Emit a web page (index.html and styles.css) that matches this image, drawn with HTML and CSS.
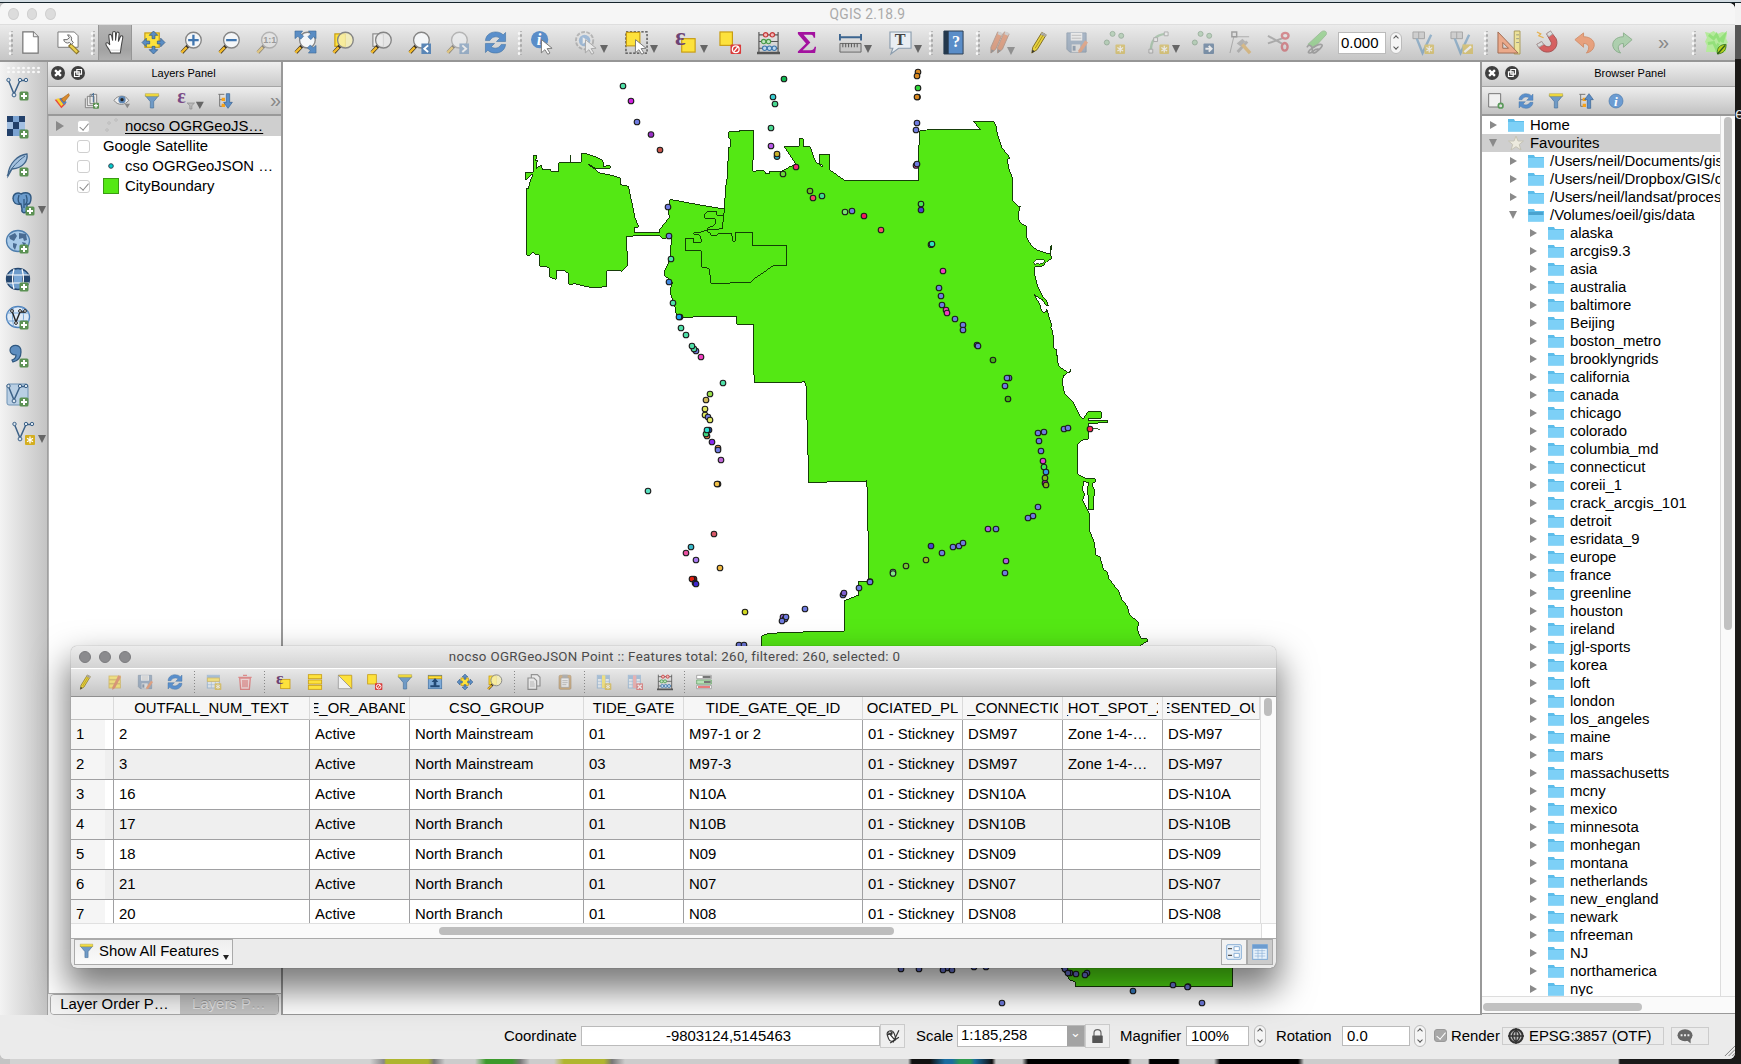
FILE: index.html
```
<!DOCTYPE html>
<html lang="en">
<head>
<meta charset="utf-8">
<title>QGIS 2.18.9</title>
<link rel="stylesheet" href="styles.css">
</head>
<body>
<div class="desktop">
  <div class="app">
    <header class="titlebar"><span class="lights"><i></i><i></i><i></i></span><span class="title">QGIS 2.18.9</span></header>
    <nav class="toolbar" id="toolbar"></nav>
    <main class="main">
      <aside class="sidebar" id="sidebar"></aside>
      <section class="layers">
        <div class="panel-head"><span class="pbtn" data-icon="close"></span><span class="pbtn" data-icon="float"></span><b>Layers Panel</b></div>
        <div class="panel-tools layer-tools">
          <span data-icon="brush"></span><span data-icon="group"></span><span data-icon="eye"></span><span data-icon="filter"></span><span class="eps" data-icon="epsfilter"></span><span data-icon="expand"></span><span class="more">»</span>
        </div>
        <div class="layer-list">
          <div class="layer selected"><i class="tri right"></i><i class="check on"></i><svg class="sym" viewBox="0 0 16 16"><g fill="#ddd" stroke="#aaa" stroke-width=".7"><circle cx="13" cy="2" r="1.2"/><circle cx="6" cy="5" r="1.2"/><circle cx="4" cy="12" r="1.2"/></g></svg><u>nocso OGRGeoJS…</u></div>
          <div class="layer"><i class="tri"></i><i class="check"></i><span>Google Satellite</span></div>
          <div class="layer"><i class="tri"></i><i class="check"></i><svg class="sym" viewBox="0 0 16 16"><circle cx="8" cy="8" r="2.3" fill="#0cc" stroke="#345" stroke-width="1"/></svg><span>cso OGRGeoJSON …</span></div>
          <div class="layer"><i class="tri"></i><i class="check on"></i><i class="sym swatch"></i><span>CityBoundary</span></div>
        </div>
        <div class="tabs"><span class="tab active">Layer Order P…</span><span class="tab">Layers P…</span></div>
      </section>
      <section class="canvas">
        <svg id="map" viewBox="283 62 1197 952">
          <g class="shape" transform="translate(500 100) scale(.33333)">
            <path class="land" d="M80 465V265L86 264 90 246 97 228 98 222 90 228 77 241V217L101 216V166H109V175L106 182 112 181 108 205 124 196 127 208H150L152 214H176V188L212 187V164L213 187H244V160L258 161 280 168 306 179 312 190 311 200 326 195 333 202 328 207H288L270 195 265 194 285 207 296 218 340 227 361 234V254L373 256 385 259 396 310 404 350 416 381 403 382V397L477 398 480 388 508 352 505 328 509 300 515 299 600 315 673 327 677 262 683 225 685 143 690 142 691 120 686 112V95H718L720 91H760V145L758 214 768 213 770 210 788 211 796 216 797 222H808V214H844L872 199 888 193 853 140 898 139V116H910V139L930 140 940 168 948 186 966 200 970 198 958 190V163H989L988 209 1034 241H1256V158L1259 92 1278 91 1280 89 1442 88 1420 65H1482L1488 77 1492 103 1505 142 1530 174 1522 178 1525 200 1538 238V302L1558 323 1561 317 1559 325 1556 335V360L1564 371 1578 378 1580 412 1592 434 1610 450 1640 460 1651 461 1653 440 1649 441 1655 437 1651 461 1655 476 1640 485 1628 498 1605 500 1602 504 1603 520 1612 556 1627 588 1640 602 1645 617 1638 615 1628 600 1612 590 1602 582 1609 596 1618 610 1625 632 1631 637 1638 635 1640 626 1644 640 1656 678 1652 684 1657 690 1661 720 1662 745 1670 750 1669 765 1674 768 1673 780 1675 796 1685 805 1704 818 1711 812 1710 806 1711 815 1700 820 1690 828 1687 850 1694 880 1705 893 1717 902 1742 952 1748 956 1752 953 1764 935H1804V955H1765V962H1823V968L1765 970V1018H1750L1730 1035 1733 1039V1122L1750 1132 1760 1137H1786V1146L1779 1148V1162L1783 1170 1780 1230H1766V1190L1762 1180 1765 1147 1750 1145 1748 1170 1754 1185 1747 1200 1760 1225 1768 1242V1290L1783 1328 1788 1365 1800 1370 1810 1408 1822 1415 1826 1435 1856 1474 1866 1500 1882 1518 1888 1542 1917 1570 1913 1580V1592L1923 1615H1940L1943 1623 1932 1630 1920 1637 2198 2200V2659H1726V2645L1710 2640 1680 2600 785 2200V1608L805 1600 936 1595 1033 1594V1502L1076 1485V1444H1106V1298L1103 1290 1102 1180 1100 1142 1094 1144 925 1147V1100L918 855 914 845 900 847H763L760 780V673H710L709 649 625 650 538 652 528 640 524 615 518 600 511 580 513 560 517 548 505 535 493 527 494 512 505 490 511 470 513 435 516 418 505 408 495 416 488 417 477 406 400 408 380 409 382 497 365 514 355 511 320 512V560L275 563 240 555 222 550 217 555 207 552 206 520 190 511 170 510 168 538 149 532V505L140 500 119 499 117 465 104 463 101 455 90 466Z"/>
            <path class="inner" d="M557 415H580V427H604V420L598 404 582 402V398L600 397 620 390 668 386 670 345 663 347 650 346V335H622L614 342V354L645 356 647 368 640 378 623 383V395L632 400V406H650L656 401H695L698 424H706L707 397H757L758 438 860 437V496L820 497 755 542 752 548 632 550 629 510 620 502H605L604 452H557ZM673 327L674 337 668 345M670 345L673 338"/>
            <path class="water" d="M1601 485L1610 479H1633V487L1618 493 1612 490 1604 496ZM1779 987L1788 985 1800 989"/>
          </g>
          <g id="dots"></g>
        </svg>
      </section>
      <section class="browser">
        <div class="panel-head"><span class="pbtn" data-icon="close"></span><span class="pbtn" data-icon="float"></span><b>Browser Panel</b></div>
        <div class="panel-tools browser-tools">
          <span data-icon="addsel"></span><span data-icon="refresh"></span><span data-icon="filter"></span><span data-icon="collapse"></span><span data-icon="info"></span>
        </div>
        <div class="tree-wrap">
          <div class="tree" id="tree"></div>
          <div class="vscroll"><i></i></div>
        </div>
        <div class="hscroll"><i></i></div>
      </section>
    </main>
    <footer class="status">
      <span class="lbl coord">Coordinate</span><span class="field f-coord">-9803124,5145463</span><span class="sbtn" data-icon="mouse"></span>
      <span class="lbl scale">Scale</span><span class="combo"><span>1:185,258</span><i>⌄</i></span><span class="sbtn" data-icon="lock"></span>
      <span class="lbl mag">Magnifier</span><span class="field f-mag">100%</span><span class="spin"><i></i><i></i></span>
      <span class="lbl rot">Rotation</span><span class="field f-rot">0.0</span><span class="spin"><i></i><i></i></span>
      <span class="check grey on"></span><span class="lbl render">Render</span>
      <span class="epsg"><span data-icon="globe"></span>EPSG:3857 (OTF)</span><span class="msg" data-icon="bubble"></span>
      <svg class="grip" viewBox="0 0 12 12"><path d="M1 12L12 1M5 12L12 5M9 12L12 9" stroke="#777"/></svg>
    </footer>
  </div>
  <div class="behind"><span class="b1"></span><span class="b2"></span><span class="b3">e</span></div>
</div>

<section class="attr">
  <header class="attr-title"><span class="lights dark"><i></i><i></i><i></i></span><span>nocso OGRGeoJSON Point :: Features total: 260, filtered: 260, selected: 0</span></header>
  <div class="attr-tools" id="attrTools"></div>
  <div class="attr-body">
    <div class="grid" id="grid"></div>
    <div class="attr-v"><i></i></div>
  </div>
  <div class="attr-h"><i></i><b></b></div>
  <footer class="attr-foot"><button class="show"><span data-icon="filter"></span>Show All Features<i></i></button><span class="views"><span data-icon="form"></span><span class="on" data-icon="table"></span></span></footer>
</section>
<script src="app.js"></script>
</body>
</html>
```
FILE: styles.css
```
* { box-sizing: border-box; }
html, body { margin: 0; height: 100%; overflow: hidden; }
body { font: 14.9px/18px "Liberation Sans", Arial, sans-serif; color: #000; }
i { font-style: normal; }
svg { display: block; overflow: visible; }
span[data-icon] svg { width: 100%; height: 100%; }

.desktop {
  display: flex; width: 1741px; height: 1064px; padding-top: 3px;
  background:
    linear-gradient(#d3dce2 0 2px, #16242c 2px 3px, transparent 3px),
    linear-gradient(90deg, #c4c4c4 0 10px, #d2d2d2 10px 370px, #888 384px, #aeb52f 386px 428px, #777 434px, #ccc 445px 475px, #3c9a2c 486px 512px, #777 520px, #ccc 530px 554px, #b0b62f 564px 604px, #777 612px, #ccc 625px 908px, #111 912px 930px, #1a6da0 945px 952px, #2e9a50 960px 970px, #1a6da0 975px, #111 992px, #ccc 996px 1022px, #000 1028px 1128px, #ccc 1132px 1148px, #000 1150px 1178px, #ccc 1180px 1214px, #000 1220px 1298px, #ccc 1304px 1618px, #1a1a1a 1620px);
}
.app { display: flex; flex-direction: column; width: 1735px; height: 1056px; background: #ebebeb; border-radius: 6px; overflow: hidden; }
.behind { display: flex; flex-direction: column; width: 6px; height: 1056px; background: #1b1917; }
.b1 { height: 22px; background: #f2f2f2; }
.b2 { height: 34px; background: #565656; }
.b3 { margin-top: 46px; color: #ddd; font-size: 16px; overflow: hidden; }

.titlebar { display: flex; align-items: center; height: 22px; background: #f6f6f6; border-bottom: 1px solid #dedede; }
.titlebar .title { width: 1735px; margin-left: -56px; padding-top: 1px; text-align: center; color: #aaa; font: 13.8px Roboto, sans-serif; letter-spacing: .3px; flex: none; }
.lights { display: flex; flex: none; gap: 8px; padding-left: 8px; width: 56px; }
.lights i { width: 12px; height: 12px; border-radius: 50%; background: #dcdcdc; border: 1px solid #cfcfcf; }

.toolbar { display: flex; align-items: center; height: 37px; padding-left: 11px; background: linear-gradient(#ebebeb, #c6c6c6); border-bottom: 2px solid #969696; }
.tool { display: flex; align-items: center; justify-content: center; position: relative; width: 38px; height: 35px; flex: none; }
.tool.menu { width: 50px; }
.tool svg { width: 23px; height: 23px; }
.tool.menu::after, .tool.menu2::after { content: ""; position: absolute; right: 3px; bottom: 7px; border: 4px solid transparent; border-top: 8px solid #666; border-bottom: 0; }
.tool.menu2::after { opacity: .6; right: 4px; bottom: 5px; }
.tool.active { width: 34px; margin: 0 2px; background: linear-gradient(#b5b5b5, #a2a2a2 70%, #b0b0b0); border: solid #969696; border-width: 0 1px; }
.tool.off svg { opacity: .48; }
.tool.soft svg { opacity: .8; }
.handle { width: 9px; height: 24px; flex: none; background: radial-gradient(circle, #f8f8f8 1px, transparent 1.6px) 3px 0/4px 5px, radial-gradient(circle, #aaa 1px, transparent 1.5px) 5px 2px/4px 5px; background-repeat: repeat-y; }
.handle.first { margin-left: -6px; margin-right: -3px; }
.num { width: 48px; height: 22px; margin-left: 3px; padding-left: 2px; background: #fff; border: 1px solid #bbb; font-size: 15px; line-height: 20px; }
.spin { display: flex; flex-direction: column; justify-content: center; gap: 5px; align-items: center; width: 12px; height: 22px; background: #f5f5f5; border: 1px solid #bbb; border-radius: 6px; flex: none; }
.spin i { width: 4px; height: 4px; border: solid #555; border-width: 1px 0 0 1px; transform: rotate(45deg); }
.spin i + i { transform: rotate(225deg); }
.toolbar .spin { margin: 0 2px 0 4px; }
.push { flex: 1; }
.more { color: #888; font-size: 20px; line-height: 20px; }
.toolbar .more { width: 15px; margin-right: 15px; padding-bottom: 2px; }

.main { display: flex; height: 953px; }
.sidebar { display: flex; flex-direction: column; width: 48px; padding: 4px 0 0 6px; background: linear-gradient(90deg, #f3f3f3, #c4c4c4); border-right: 1px solid #a0a0a0; flex: none; }
.sidebar .dots { width: 34px; height: 8px; margin-bottom: 3px; background: radial-gradient(circle, #f8f8f8 1px, transparent 1.6px) 0 0/5px 4px; }
.stool { display: flex; position: relative; width: 42px; height: 38.2px; align-items: flex-start; }
.stool svg { width: 24px; height: 24px; }
.stool.sub svg { margin-left: 6px; }
.stool.sub::after { content: ""; position: absolute; left: 32px; top: 14px; border: 4px solid transparent; border-top: 8px solid #666; border-bottom: 0; }

.layers { display: flex; flex-direction: column; width: 235px; background: #e9e9e9; border-right: 2px solid #999; flex: none; }
.panel-head { display: flex; align-items: center; height: 25px; background: linear-gradient(#efefef, #cacaca); border-bottom: 1px solid #a5a5a5; gap: 4px; padding: 0 0 2px 3px; flex: none; }
.panel-head b { flex: 1; font-weight: 400; font-size: 11px; text-align: center; }
.layers .panel-head b { padding-right: 5px; }
.pbtn { width: 14px; height: 14px; margin-right: 2px; flex: none; }
.panel-tools { display: flex; align-items: center; height: 29px; background: linear-gradient(#ededed, #c2c2c2); border-bottom: 2px solid #999; flex: none; }
.panel-tools > span { width: 16px; height: 16px; flex: none; margin-right: 14px; }
.layer-tools { padding-left: 6px; }
.panel-tools > .eps { width: 25px; margin: 0 14px 0 4px; }
.panel-tools > .more { width: auto; height: auto; margin: 0 0 2px auto; }
.layer-list { flex: 1; background: #fff; border-left: 1px solid #b5b5b5; border-bottom: 1px solid #aaa; }
.layer { display: flex; align-items: center; height: 20px; white-space: nowrap; }
.layer.selected { background: #cfcfcf; }
.layer u { text-underline-offset: 2px; }
.tri { width: 8px; margin: 0 13px 0 7px; flex: none; }
.tri.right { border: 5px solid transparent; border-left: 8px solid #8a8a8a; border-right: 0; }
.check { display: flex; align-items: center; justify-content: center; width: 13px; height: 13px; border: 1px solid #cfcfcf; border-radius: 3px; background: #fff; margin-right: 13px; flex: none; }
.check.on::before { content: ""; width: 4px; height: 8px; border: solid #8a8a8a; border-width: 0 1.6px 1.6px 0; transform: rotate(40deg) translateY(-1px); }
.sym { width: 16px; height: 16px; margin-right: 6px; flex: none; }
.swatch { background: #54e814; border: 1px solid #3a9c12; }
.tabs { display: flex; height: 21px; margin: 0 2px 0; border: 1px solid #a8a8a8; border-radius: 4px; overflow: hidden; }
.tab { width: 99px; background: #c4c4c4; color: #e4e4e4; text-shadow: 0 -1px 0 #999; text-align: center; line-height: 19px; white-space: nowrap; }
.tab.active { width: 130px; background: #f4f4f4; color: #000; text-shadow: none; padding-right: 2px; }

.canvas { width: 1197px; background: #fff; border-bottom: 1px solid #999; flex: none; }
#map { width: 1197px; height: 952px; overflow: hidden; }
.land { fill: #54e814; stroke: #173d0a; stroke-width: 3; shape-rendering: crispEdges; }
.inner { fill: none; stroke: #124006; stroke-width: 3; shape-rendering: crispEdges; }
.water { fill: #fff; stroke: #173d0a; stroke-width: 2.5; shape-rendering: crispEdges; }
#dots circle { stroke: #1c1c1c; stroke-width: 1.1; }

.browser { display: flex; flex-direction: column; flex: 1; min-width: 0; border-left: 2px solid #999; }
.browser-tools { padding-left: 6px; }
.tree-wrap { display: flex; height: 880px; }
.tree { width: 238px; background: #fff; overflow: hidden; }
.node { display: flex; align-items: center; height: 18px; white-space: nowrap; padding-left: 7px; }
.node.l1 { padding-left: 27px; }
.node.l2 { padding-left: 47px; }
.node.sel { background: #cfcfcf; }
.node .arrow { width: 9px; height: 10px; margin-right: 10px; flex: none; }
.node .fold { width: 16px; height: 14px; margin-right: 6px; flex: none; }
.vscroll { flex: 1; background: #fafafa; border-left: 1px solid #ddd; padding: 1px 3px; }
.vscroll i { display: block; width: 8px; height: 513px; border-radius: 4px; background: #c1c1c1; }
.hscroll { height: 18px; padding: 6px 1px 3px; background: #fafafa; border-top: 1px solid #ddd; border-bottom: 1px solid #999; }
.hscroll i { display: block; width: 159px; height: 8px; border-radius: 4px; background: #c1c1c1; }

.status { display: flex; align-items: center; flex: 1; padding: 0 0 3px 504px; white-space: nowrap; background: #ebebeb; }
.status > * { flex: none; }
.field { height: 20px; background: #fff; border: 1px solid #bbb; line-height: 18px; padding-left: 4px; }
.coord { width: 77px; }
.f-coord { width: 299px; text-align: center; padding: 0 4px 0 0; }
.sbtn { width: 25px; height: 24px; padding: 4px; border: 1px solid #ccc; background: #efefef; }
.scale { width: 52px; padding-left: 11px; }
.combo { display: flex; width: 128px; height: 22px; background: #fff; border: 1px solid #bbb; line-height: 19px; justify-content: space-between; }
.combo span { padding-left: 3px; }
.combo i { width: 17px; background: #a3a3a3; color: #fff; text-align: center; font-size: 13px; line-height: 14px; }
.mag { width: 76px; padding-left: 10px; }
.f-mag { width: 63px; margin-right: 5px; }
.rot { width: 76px; padding-left: 10px; }
.f-rot { width: 68px; margin-right: 4px; }
.check.grey { margin: 0 4px 0 8px; background: #a8a8a8; border-color: #999; }
.check.grey.on::before { border-color: #fff; }
.render { width: 51px; }
.epsg { display: flex; align-items: center; width: 162px; height: 18px; border: 1px solid #ccc; padding-left: 5px; }
.epsg span { width: 16px; height: 16px; margin-right: 5px; }
.msg { width: 38px; height: 18px; margin-left: 7px; border: 1px solid #ccc; padding: 1px 14px 0 4px; }
.grip { width: 11px; height: 11px; margin: 30px 0 0 auto; }

.attr { display: flex; flex-direction: column; position: absolute; left: 71px; top: 646px; width: 1205px; height: 322px; border-radius: 6px; overflow: hidden; background: #ebebeb; box-shadow: 0 0 1px rgba(0,0,0,.6), 0 18px 34px 4px rgba(0,0,0,.52); }
.attr-title { display: flex; align-items: center; height: 22px; background: linear-gradient(#ececec, #d3d3d3); font: 13.3px Roboto, sans-serif; color: #4a4a4a; flex: none; }
.attr-title span:last-child { width: 1205px; margin-left: -64px; margin-right: -20px; text-align: center; flex: none; letter-spacing: .33px; padding: 0 0 1px 2px; }
.lights.dark { width: 64px; }
.lights.dark i { background: #8b8b8e; border-color: #7b7b7e; }
.attr-tools { display: flex; align-items: center; height: 29px; padding-bottom: 2px; border-top: 1px solid #fff; border-bottom: 1px solid #8f8f8f; background: linear-gradient(#e8e8e8, #c4c4c4); flex: none; }
.attr-tools .t { display: flex; justify-content: center; width: 30px; }
.attr-tools .t svg { width: 16px; height: 16px; }
.attr-tools .t:first-child { width: 28px; }
.attr-tools .t + .t, .attr-tools .sep { position: relative; left: 1px; }
.attr-tools .t.off { opacity: .55; }
.attr-tools .sep { width: 10px; height: 22px; background: linear-gradient(#888 1px, transparent 1px) 4px 0/1px 3px repeat-y; }
.attr-body { display: flex; height: 226px; overflow: hidden; }
.grid { width: 1189px; height: 226px; overflow: hidden; background: #fff; }
.row { display: grid; grid-template-columns: 43px 196px 100px 174px 100px 179px 100px 100px 100px 97px; height: 30px; }
.row > span { border-right: 1px solid #a0a0a2; border-bottom: 1px solid #a0a0a2; padding: 5px 0 0 5px; white-space: nowrap; overflow: hidden; }
.row > span:last-child { border-right: 0; }
.row:nth-child(odd) { background: #efefef; }
.row > .rn { background: linear-gradient(90deg, #f5f5f5 34px, transparent 34px); }
.row.head { height: 23px; background: #f6f6f6; }
.row.head > span { display: flex; justify-content: center; border-right: 1px solid #dadada; border-bottom-color: #c0c0c0; padding: 2px 4px 0; }
.row.head > .clipend { justify-content: flex-start; }
.row.head em { font-style: normal; flex: none; }
.row.head > span > div { display: flex; justify-content: inherit; width: 100%; overflow: hidden; }
.attr-v { width: 16px; background: #fafafa; border-left: 1px solid #ddd; padding: 1px 3px; }
.attr-v i { display: block; width: 8px; height: 18px; border-radius: 4px; background: #bdbdbd; }
.attr-h { display: flex; align-items: center; height: 16px; background: #fafafa; border-top: 1px solid #e0e0e0; border-bottom: 1px solid #aaa; flex: none; }
.attr-h i { width: 455px; height: 8px; margin-left: 368px; border-radius: 4px; background: #bdbdbd; }
.attr-h b { width: 15px; height: 14px; margin-left: auto; background: #fff; border-left: 1px solid #ddd; }
.attr-foot { display: flex; justify-content: space-between; padding: 0 3px; }
.show { display: flex; align-items: center; width: 159px; height: 26px; padding: 0 0 2px 4px; font: inherit; color: #000; border: 1px solid #aaa; background: linear-gradient(#eee, #fafafa); white-space: nowrap; }
.show span { width: 15px; height: 16px; margin-right: 5px; }
.show i { margin: 12px 0 0 4px; border: 3.5px solid transparent; border-top: 5px solid #222; border-bottom: 0; }
.views { display: flex; }
.views span { width: 26px; height: 26px; padding: 4px; border: 1px solid #aaa; background: #f2f2f2; }
.views .on { background: #cbcbcb; }
```
FILE: app.js
```
// Badges shared by several 24x24 icons
const plus = '<rect x="13.500" y="14.500" width="9" height="9" rx="1.500" fill="#5b9153"/><path d="M18 16v6M15 19h6" stroke="#fff" stroke-width="2"/>';
const star = '<rect x="13" y="14" width="10" height="10" rx="1" fill="#d4ae1f"/><path d="M18 15.500v7M15 17.200l6 3.600M15 20.800l6-3.600" stroke="#fff" stroke-width="1.300"/>';
const lens = (fill, inner = '') => `<path d="M2 22.500l6.500-7" stroke="#3a3020" stroke-width="3.800"/><path d="M1.500 22.500L7 17" stroke="#f0b92c" stroke-width="2.600"/><circle cx="14" cy="9.500" r="8.200" fill="${fill}" stroke="#858585" stroke-width="1.400"/>${inner}`;
const vee = (c = '#3d6288') => `<path d="M2.500 3.500L8 17l6-13.500h6" fill="none" stroke="${c}" stroke-width="1.500"/><g fill="#dde6ee" stroke="${c}"><circle cx="2.500" cy="3" r="1.700"/><circle cx="8" cy="18" r="1.900"/><circle cx="14" cy="3" r="1.700"/><circle cx="20" cy="3" r="1.700"/></g>`;
const pencil = '<path d="M6 17L15.500 1.500l4.500 2.500L10.500 19.500 5 23z" fill="#e8d33c" stroke="#7d6a22"/><path d="M15 2.500l4.500 2.500" stroke="#aaa" stroke-width="3"/><path d="M8.500 18L17 4" stroke="#a98f1d"/><path d="M5 23l.7-3.500 2.500 1.500z" fill="#333"/>';
const arrows = c => `<g fill="${c}" stroke="#2f5580" stroke-width=".7"><path d="M12 0l4.500 4.500h-3V8h-3V4.500h-3z"/><path d="M12 24l4.500-4.500h-3V16h-3v3.500h-3z"/><path d="M0 12l4.500-4.500v3H8v3H4.500v3z"/><path d="M24 12l-4.500-4.500v3H16v3h3.500v3z"/></g>`;
const cursor = '<path d="M11 9l11 9-5.200.4 3 4.600-2.300 1.300-3-4.800-3.700 3.300z" fill="#fff" stroke="#777"/>';
const rect = (x, y, w, h, f = '#fde23c', s = '#c79c12') => `<rect x="${x}" y="${y}" width="${w}" height="${h}" fill="${f}" stroke="${s}" stroke-width="1.200"/>`;
const eps = '<text x="0" y="15" font-family="Liberation Serif, serif" font-weight="bold" font-size="26" fill="#6d4475">ε</text>';
const refresh = '<path d="M1.500 10C2 4 7 1 12 1c3.500 0 6 1 8 3l2.500-2.500V11H13l3.500-3.500C15 6 9 4.500 6 10zM22.500 14C22 20 17 23 12 23c-3.500 0-6-1-8-3l-2.500 2.500V13H11l-3.500 3.500c1.500 1.500 7.500 3 10.500-2.500z" fill="#5a8fcb" stroke="#41709f" stroke-width=".6"/>';
const filter = '<path d="M2 4h20l-7.500 9v9.500l-5 0V13z" fill="#6f9ac6" stroke="#4a729c"/><path d="M2 1h20v4H2z" fill="#f3dc3e" stroke="#a89a3a" stroke-width=".7"/>';
const save = '<path d="M2 2h20v20H5l-3-3z" fill="#6b87a8" stroke="#4c6685"/><path d="M6 2h12v8H6z" fill="#f2f2f2"/><path d="M7 4.500h10M7 7.500h10" stroke="#999"/><path d="M7 14h9v8H7z" fill="#ddd"/><path d="M8 15.500h3v5H8z" fill="#4c6685"/><path d="M14 20l7-10 3 2-7 10-3 1z" fill="#e2753d"/>';
const points = '<g fill="#8fbf93" stroke="#55805b"><circle cx="10" cy="3" r="2.600"/><circle cx="19" cy="5" r="2.600"/><circle cx="4" cy="12" r="2.600"/></g>';
const abacus = '<path d="M2 1v22M22 1v22M2 4h20M2 11h20M2 18h20" stroke="#555" stroke-width="1.200"/><path d="M0 23h24" stroke="#555" stroke-width="2.500"/><g stroke-width="1.200"><g fill="#f5b8b8" stroke="#c43a3a"><circle cx="9" cy="4" r="2.300"/><circle cx="16" cy="4" r="2.300"/></g><g fill="#bfe5bf" stroke="#4a9a4a"><circle cx="7" cy="11" r="2.300"/><circle cx="12" cy="11" r="2.300"/></g><g fill="#bcd6ee" stroke="#3f78ae"><circle cx="8" cy="18" r="2.300"/><circle cx="13" cy="18" r="2.300"/><circle cx="18" cy="18" r="2.300"/></g></g>';
const tbl = c => `<rect x="2" y="2" width="18" height="19" fill="#e4edf5" stroke="${c}" stroke-width="1.500"/><path d="M2 5h18" stroke="${c}" stroke-width="5"/><path d="M2 11h18M2 16h18M8 3v18M14 3v18" stroke="${c}"/>`;
const globe = (f, s) => `<ellipse cx="12" cy="11" rx="11.500" ry="10.500" fill="${f}" stroke="${s}" stroke-width="1.300"/>`;

const icons = {
  close: '<circle cx="12" cy="12" r="12" fill="#3f3f3f"/><path d="M7 7l10 10M17 7L7 17" stroke="#fff" stroke-width="4"/>',
  float: '<circle cx="12" cy="12" r="12" fill="#3f3f3f"/><path d="M10 6h8v8h-8zM6 10h8v8H6z" fill="#3f3f3f" stroke="#fff" stroke-width="2"/>',
  file: '<path d="M4 1h11l5 5v17H4z" fill="#fff" stroke="#777" stroke-width="1.300"/><path d="M15 1v5h5" fill="#eee" stroke="#777"/>',
  wrench: '<path d="M1 1h17l4 4v12H1z" fill="#fff" stroke="#777"/><path d="M13 14l9 9" stroke="#87722a" stroke-width="4.500"/><path d="M14 15l7 7" stroke="#e9cf4d" stroke-width="2.500"/><path d="M7 9a4 4 0 0 0 6 3l2 2 2-2-2-2.500a4 4 0 0 0-4-5.500l2 3-2.500 2z" fill="#eee" stroke="#666"/>',
  hand: '<path d="M7 23c-1-4-5-7-5-9.500 0-2 2.500-1.500 4 1L5 5c0-2 2.500-2 3 0l1 5V2c0-2 3-2 3 0v8l1-7.500c.3-2 3-1.700 2.800.3L15 11l2-5c.7-1.800 3-1 2.600.8L18 16l-1 7z" fill="#fff" stroke="#444" stroke-width="1.100"/><path d="M6 20h11" stroke="#ccc" stroke-width=".8"/>',
  pan: rect(3, 2, 15, 15) + arrows('#5a8dc4'),
  zoomin: lens('#f4f6f8', '<path d="M14 4v11M8.500 9.500h11" stroke="#3f75af" stroke-width="2.400"/>'),
  zoomout: lens('#f4f6f8', '<path d="M8.500 9.500h11" stroke="#3f75af" stroke-width="2.400"/>'),
  native: lens('#e9e9e9', '<text x="7.500" y="13" font-size="9.500" font-weight="bold" fill="#555">1:1</text>'),
  full: lens('#f4f6f8') + '<g fill="#5a8dc4" stroke="#3c6793" stroke-width=".6"><path d="M1 0h8L7 2.500l3 3-3 3-3-3L1 8zM23 0v8l-2.500-2-3 3-3-3 3-3L15 0zM23 23h-8l2-2.500-3-3 3-3 3 3 3-2.500z"/></g>',
  zoomsel: rect(3, 3, 11, 13) + lens('#f5efb4cc'),
  zoomlayer: rect(3, 3, 11, 13, '#eee', '#888') + lens('#e9e9e9cc'),
  last: lens('#f4f6f8') + '<path d="M14 13h10v11H14z" fill="#5a86b6"/><path d="M21 15l-4 3.500 4 3.500" fill="none" stroke="#fff" stroke-width="2"/>',
  next: lens('#f4f6f8') + '<path d="M14 13h10v11H14z" fill="#5a86b6"/><path d="M17 15l4 3.500-4 3.500" fill="none" stroke="#fff" stroke-width="2"/>',
  refresh,
  identify: '<circle cx="9" cy="9" r="9" fill="#5a8dc8"/><text x="6" y="15" font-family="Liberation Serif, serif" font-style="italic" font-weight="bold" font-size="17" fill="#fff">i</text>' + cursor,
  action: '<circle cx="10" cy="10" r="9" fill="#e4e4e4" stroke="#888" stroke-width="2" stroke-dasharray="4 1.500"/><circle cx="10" cy="10" r="6" fill="#5f93cc"/><path d="M8 6.500l5.500 3.500L8 13.500z" fill="#fff"/>' + cursor,
  select: '<path d="M1 1h22v22H1z" fill="none" stroke="#444" stroke-dasharray="2.500 1.500" stroke-width="1.300"/>' + rect(1.500, 1.500, 14, 14) + cursor,
  selexpr: rect(7, 8, 14, 14) + eps,
  deselect: rect(1, 1, 13, 14) + '<rect x="12" y="14" width="11" height="10" rx="1" fill="#d93a3a"/><circle cx="17.500" cy="19" r="3.500" fill="none" stroke="#fff" stroke-width="1.400"/><path d="M15.500 21.500l4-5" stroke="#fff" stroke-width="1.400"/>',
  abacus,
  sigma: '<path d="M3 1h18v6h-1.500c-.5-2.500-1.500-3-4-3H9l7 8-8 8h8c3 0 4-1 4.500-3.500H22L21 23H3v-1.500L11.500 13 3 3z" fill="#a3129f"/>',
  measure: '<path d="M1 3v7M23 3v7M1 6.500h22" stroke="#3c6590" stroke-width="2"/><path d="M1 13h22v9H1z" fill="#c8c8c8" stroke="#666"/><path d="M4 13v4M7 13v4M10 13v4M13 13v4M16 13v4M19 13v4" stroke="#555"/>',
  tip: '<path d="M1 1h22v17H10l-8 6 2-6H1z" fill="#e9eef3" stroke="#8b9dae" stroke-width="1.200"/><text x="6" y="15" font-family="Liberation Serif, serif" font-weight="bold" font-size="17" fill="#444">T</text>',
  help: '<path d="M2 0h20v24H2z" fill="#5a8dc8" stroke="#2d3e50"/><path d="M2 0h5v24H2z" fill="#24384c"/><text x="10.500" y="17" font-family="Liberation Serif, serif" font-weight="bold" font-size="17" fill="#fff">?</text>',
  pencils: '<path d="M2 17L9 1l5 2L7 19l-5 4zM9 17L16 1l5 2-7 16-5 4z" fill="#d9632d" stroke="#8b5a42"/><path d="M2 23l.5-4 3 1.500zM9 23l.5-4 3 1.500z" fill="#555"/><path d="M9.500 2l4 1.500M16.500 2l4 1.500" stroke="#bbb" stroke-width="3"/>',
  pencil, save,
  addpoint: points + star,
  curve: '<path d="M4 21C4 10 9 4 19 3" fill="none" stroke="#77a97d" stroke-width="2.500"/><path d="M2 19h4v4H2zM7 7h4v4H7zM18 1h4v4h-4z" fill="#eee" stroke="#777"/>' + star,
  move: points + '<rect x="13" y="13" width="11" height="11" rx="1" fill="#1f4a7a"/><path d="M15 18.500h6M18.500 15.500l3 3-3 3" fill="none" stroke="#fff" stroke-width="2"/>',
  node: '<path d="M1 23L5 6h16" fill="none" stroke="#777"/><path d="M3 1h5v5H3z" fill="#ddd" stroke="#555" stroke-width="1.500"/><path d="M9 22L19 11" stroke="#888" stroke-width="3"/><path d="M12 12l10 11" stroke="#d69a32" stroke-width="3.500"/><path d="M8 13l6-5 3 3-5 5z" fill="#888"/>',
  cut: '<path d="M1 5l16 9M1 13l17-6" stroke="#777" stroke-width="2"/><g fill="none" stroke="#c4303a" stroke-width="2.500"><ellipse cx="19" cy="5" rx="3.500" ry="3"/><ellipse cx="18.500" cy="16.500" rx="3" ry="4"/></g>',
  paint: '<path d="M3 14L17 1c2-2 7-1 5 3L10 17z" fill="#5cc350" stroke="#5a9a52"/><path d="M2 17c4-7 9 6 3 6s8-10 12-9-6 9-8 9 0-5 6-4" fill="none" stroke="#666" stroke-width="1.700"/>',
  vnew: '<path d="M1 1h12v7H1zM7 1v7" fill="#bbb" stroke="#666"/><path d="M5 8l6 15 9-19" fill="none" stroke="#4883b3" stroke-width="2.500"/>' + star,
  vedit: '<path d="M1 1h12v7H1zM7 1v7" fill="#bbb" stroke="#666"/><path d="M5 8l6 15 9-19" fill="none" stroke="#4883b3" stroke-width="2.500"/><rect x="13" y="14" width="11" height="10" fill="#d4ae1f"/><path d="M15 22l7-6" stroke="#fff" stroke-width="2.500"/>',
  triangle: '<path d="M18 0h6v24h-6z" fill="#ece29a" stroke="#a89a5a"/><path d="M1 1l21 22H1zM6 12v6h6z" fill="#eba98a" stroke="#a06b52" fill-rule="evenodd"/><path d="M20 4h3M20 8h3M20 12h3" stroke="#998"/>',
  magnet: '<path d="M12 3l4-3 6 8c3 7-2 14-9 14-5 0-8-3-11-8l5-3c4 8 11 6 10 1z" fill="#d64444" stroke="#933"/><path d="M12 3l4-3 2.500 3-4 3zM2 14l5-3 2 3-5 3z" fill="#ddd" stroke="#999"/><path d="M2 1l4 2-2 2 5 2" fill="none" stroke="#e8a52a" stroke-width="1.300"/>',
  undo: '<path d="M2 9L11 2v4c8 0 12 5 11 10-1 4-4 6-8 7 4-5 3-10-3-10v4z" fill="#eb9468" stroke="#cf7d52"/>',
  redo: '<path d="M22 9L13 2v4C5 6 1 11 2 16c1 4 4 6 8 7-4-5-3-10 3-10v4z" fill="#a3cda4" stroke="#78a67a"/>',
  leaf: '<path d="M0 1l5 1 4-2 4 3 5-2 5 1-1 6 2 4-3 3 1 7H1l1-7-2-4 2-4z" fill="#b5ea9c"/><path d="M4 4l5 4 3-4 3 6 5-5-2 7M3 13l6-1 3 7 2-6" stroke="#93e07a" stroke-width="3" fill="none"/><path d="M13 24c-1-7 3-10 9-10 0 6-2 9-9 10z" fill="#b7cf1c" stroke="#3f7d22"/><path d="M13 24l8-9" stroke="#2a5d18" stroke-width="1.500"/>',
  vlayer: vee() + plus,
  raster: '<path d="M1 1h18v20H1z" fill="#7ba3d2"/><path d="M1 1h6v6H1zM13 1h6v6h-6zM7 7h6v7H7zM1 14h6v7H1z" fill="#22406a"/><path d="M13 7h6v7h-6zM1 7h6v7H1z" fill="#a3c0e2"/>' + plus,
  feather: '<path d="M2 22C3 10 12 2 21 1c1 6-3 14-15 15L2 23z" fill="#a6c3e0" stroke="#41658a" stroke-width="1.300"/><path d="M1 23C6 14 12 8 19 3" stroke="#41658a" fill="none"/>' + plus,
  elephant: '<path d="M1 7C1 1 6 0 9 2c4-2 10-2 10 4 0 5-2 7-4 6v7c-2 3-6 2-5-2l-1-5c-5 1-8-1-8-6z" fill="#6b9bcc" stroke="#2f577f" stroke-width="1.400"/><path d="M7 3c-2 6 0 9 2 9M14 3c2 5 1 8-1 10M12 7v9" fill="none" stroke="#2f577f" stroke-width="1.300"/>' + plus,
  wms: globe('#a9cbea', '#4f7ead') + '<path d="M3 6l6-3 2 3-3 5-4-2zM13 3l7 1 1 6-3 1-1-3-4 1zM7 13l4 1-2 6-2-3zM16 12l4 1-2 4z" fill="#4a6c93"/>' + plus,
  wcs: globe('#6c9bcb', '#24466e') + '<path d="M1 7h22v8H1z" fill="#24466e"/><path d="M8 7h8v8H8z" fill="#7ba8d6"/><path d="M1 7h22M1 15h22M8 1C6 8 6 14 8 21M16 1c2 7 2 13 0 20" fill="none" stroke="#fff" stroke-width="1.200"/>' + plus,
  wfs: globe('#dfeaf6', '#4f83bd') + '<path d="M1 7h22M1 15h22M8 1C6 8 6 14 8 21M16 1c2 7 2 13 0 20" fill="none" stroke="#7ba8d6"/><path d="M6 5l4 11 4-10h5" fill="none" stroke="#222" stroke-width="1.400"/><g fill="#fff" stroke="#222"><circle cx="6" cy="5" r="1.400"/><circle cx="10" cy="17" r="1.400"/><circle cx="14" cy="5" r="1.400"/><circle cx="19" cy="5" r="1.400"/></g>' + plus,
  comma: '<path d="M4 6c0-6 12-7 11 2 0 6-4 9-8 10l-1-2c3-1 4-3 4-5-4 0-6-2-6-5z" fill="#5d8dbf" stroke="#2f577f" stroke-width="1.200"/>' + plus,
  virtual: '<rect x="1" y="1" width="21" height="21" rx="2" fill="#b9cfe4" stroke="#6f93b5"/>' + vee() + plus,
  newv: vee() + star,
  brush: '<path d="M1 10l10 13 7-7-5-8z" fill="#e84c3d"/><path d="M3 9l8 11 3-3-7-9z" fill="#f6d433"/><path d="M8 8l7 10 4-4-6-7z" fill="#4e86c9"/><path d="M11 9L22 1l1 3-8 10z" fill="#d8892c" stroke="#a8651a"/>',
  group: '<path d="M2 8v14h14M5 5v14h10V5zM9 2v14h10V2z" fill="#e9e9e9" stroke="#777" stroke-width="1.300"/><path d="M14 0v14M11 4l3-3" stroke="#456c92" stroke-width="1.500"/>' + plus,
  eye: '<path d="M0 11C5 3 17 2 22 11c-5 8-17 8-22 0z" fill="#eee" stroke="#888" stroke-width="1.500"/><circle cx="12" cy="10" r="5.500" fill="#5d86b4"/><circle cx="12" cy="10" r="2.500" fill="#222"/><path d="M16 16h8l-4 7z" fill="#888"/>',
  filter,
  epsfilter: '<text x="-8" y="15" font-family="Liberation Serif, serif" font-weight="bold" font-size="30" fill="#7a4a86">ε</text><path d="M7 15h11l-4 4v5h-3v-5z" fill="#bbb" stroke="#888"/><path d="M20 13h12l-6 11z" fill="#666"/>',
  expand: '<path d="M2 2h9M4 2v18h6M4 10h6" fill="none" stroke="#777" stroke-width="1.500"/><path d="M7 7h5v5H7zM7 16h5v5H7z" fill="#f7a21b"/><path d="M14 1h5v13h4l-6.500 9L10 14h4z" fill="#5a8dc8" stroke="#365f8c"/>',
  collapse: '<path d="M2 2h9M4 2v18h6M4 10h6" fill="none" stroke="#777" stroke-width="1.500"/><path d="M7 7h5v5H7zM7 16h5v5H7z" fill="#f7a21b"/><path d="M14 23h5V10h4l-6.500-9L10 10h4z" fill="#5a8dc8" stroke="#365f8c"/>',
  addsel: '<path d="M1 1h18v20H1z" fill="#f0f0f0" stroke="#777" stroke-width="1.500"/><circle cx="19" cy="19" r="3.500" fill="#ddd" stroke="#5a9a5a" stroke-width="2.500"/>',
  info: '<circle cx="12" cy="12" r="10.500" fill="#6c9cd2" stroke="#4877ab"/><text x="9" y="19" font-family="Liberation Serif, serif" font-style="italic" font-weight="bold" font-size="20" fill="#fff">i</text>',
  mouse: '<rect x="4" y="3" width="12" height="18" rx="6" fill="#fff" stroke="#333" stroke-width="2" transform="rotate(-20 10 12)"/><path d="M3 10l11-4M9 3l2 7M13 23L23 2M8 24l15-10M5 6l12 14" stroke="#333" stroke-width="2"/>',
  lock: '<path d="M6 12V7c0-8 12-8 12 0v5" fill="none" stroke="#666" stroke-width="2"/><rect x="3" y="11" width="18" height="13" rx="1" fill="#555"/>',
  globe: '<circle cx="12" cy="12" r="10" fill="#bbb" stroke="#333" stroke-width="3"/><path d="M12 0v24M0 12h24M12 3c-7 5-7 13 0 18M12 3c7 5 7 13 0 18" fill="none" stroke="#333" stroke-width="2"/>',
  bubble: '<ellipse cx="12" cy="10" rx="12" ry="9.500" fill="#666"/><path d="M14 17l7 6v-8z" fill="#666"/><path d="M5 10h3M10.500 10h3M16 10h3" stroke="#eee" stroke-width="3"/>',
  multiedit: rect(3, 3, 17, 5) + rect(3, 9, 17, 5) + rect(3, 15, 17, 6) + '<path d="M8 20L17 2l4 2-9 17-4 3z" fill="#d9632d"/>',
  addrow: tbl('#7aa3cc') + rect(2, 6, 18, 5) + star,
  trash: '<path d="M4 6h16l-1.500 17h-13zM2 5h20M9 2h6M9 9v11M12 9v11M15 9v11" fill="#f6cccc" stroke="#d94848" stroke-width="2"/>',
  selall: rect(2, 1, 20, 6) + rect(2, 9, 20, 6) + rect(2, 17, 20, 6),
  invert: '<path d="M2 2h20v20z" fill="#f0f0f0" stroke="#888"/><path d="M2 2h20v20z" fill="#fde23c" stroke="#c79c12"/><path d="M2 2v20h20z" fill="#f0f0f0" stroke="#888"/>',
  totop: rect(2, 2, 20, 20, '#7fabd8', '#4a78a8') + rect(2, 3, 20, 4) + '<path d="M12 6l5 6h-3v5h5v3H5v-3h5v-5H7z" fill="#234a75"/>',
  panrow: rect(6, 6, 11, 11) + arrows('#5a8dc4'),
  copy: '<path d="M8 1h9l4 4v13H8z" fill="#f2f2f2" stroke="#555" stroke-width="1.700"/><path d="M3 6h9l4 4v13H3z" fill="#f2f2f2" stroke="#555" stroke-width="1.700"/><path d="M6 12h6M6 15h7M6 18h7" stroke="#777"/>',
  paste: '<rect x="3" y="2" width="18" height="21" rx="2" fill="#c08a40" stroke="#8a6a3c"/><path d="M6 6h12v14H6z" fill="#f2f2f2" stroke="#777"/><path d="M8 1h8v5H8z" fill="#888"/><path d="M8 10h8M8 13h8M8 16h6" stroke="#777"/>',
  newcol: tbl('#7aa3cc') + '<path d="M9 2h5v19H9z" fill="#fde23c"/>' + star,
  delcol: tbl('#7aa3cc') + '<path d="M9 2h5v19H9z" fill="#f09090"/><path d="M14 14h10v10H14z" fill="#d94848"/><path d="M16 16l6 6M22 16l-6 6" stroke="#fff" stroke-width="2"/>',
  cond: '<path d="M1 2h22v5H1zM1 17h22v5H1z" fill="#fff" stroke="#888"/><path d="M1 9h22v6H1z" fill="#b9e2b9" stroke="#5a9a5a"/><path d="M10 4.500h12M12 12h10" stroke="#777" stroke-width="3"/><path d="M3 19.500h18" stroke="#e05050" stroke-width="2"/>',
  form: '<rect x="1" y="1" width="22" height="22" rx="2" fill="#e8f0f8" stroke="#8bb0d6" stroke-width="1.500"/><path d="M12 4h8v6h-8zM12 14h8v6h-8z" fill="#fff" stroke="#8bb0d6" stroke-width="1.500"/><path d="M3 7h6M3 17h6" stroke="#555" stroke-width="2"/>',
  table: '<rect x="1" y="1" width="22" height="22" fill="#e8f2fb" stroke="#7ea9d6" stroke-width="1.500"/><path d="M1 4h22" stroke="#6c9cd0" stroke-width="6"/><path d="M4 10h16M4 14h16M4 18h16M9 8v14M15 8v14" stroke="#8bb0d6"/>'
};
const svg = n => `<svg viewBox="0 0 24 24" fill="none">${icons[n]}</svg>`;
document.querySelectorAll('[data-icon]').forEach(e => { e.innerHTML = svg(e.dataset.icon); });

// Main toolbar: "|" is a drag handle; suffixes after ":" are state classes
const bar = 'file wrench | hand:active pan zoomin zoomout native:off full zoomsel zoomlayer last next:off refresh | identify action:menu,off select:menu selexpr:menu deselect abacus sigma measure:menu tip:menu | help | pencils:menu2,off pencil save:off addpoint:off curve:menu,off move:off node:off cut:off paint:off # vnew:off vedit:off | triangle magnet:soft undo:soft redo:soft'.split(' ');
const item = s => {
  if (s === '|') return '<i class="handle"></i>';
  if (s === '#') return '<span class="num">0.000</span><span class="spin"><i></i><i></i></span>';
  const [n, c = ''] = s.split(':');
  return `<span class="tool ${c.replace(',', ' ')}">${svg(n)}</span>`;
};
document.getElementById('toolbar').innerHTML = '<i class="handle first"></i>' + bar.map(item).join('') + '<i class="push"></i><span class="more">»</span><i class="handle"></i>' + item('leaf');

document.getElementById('sidebar').innerHTML = '<i class="dots"></i>' +
  ['vlayer', 'raster', 'feather', 'elephant:sub', 'wms', 'wcs', 'wfs', 'comma', 'virtual', 'newv:sub'].map(s => {
    const [n, c = ''] = s.split(':');
    return `<span class="stool ${c}">${svg(n)}</span>`;
  }).join('');

document.getElementById('attrTools').innerHTML =
  'pencil multiedit:off save:off refresh | addrow:off trash:off | selexpr selall invert deselect filter totop panrow zoomsel | copy:off paste:off | newcol:off delcol:off abacus | cond'.split(' ').map(s => {
    if (s === '|') return '<i class="sep"></i>';
    const [n, c = ''] = s.split(':');
    return `<span class="t ${c}">${svg(n)}</span>`;
  }).join('');

// Browser tree
const arrow = open => `<svg class="arrow" viewBox="0 0 9 10"><path d="${open ? 'M0 1h8L4 9z' : 'M1 1l7 4-7 4z'}" fill="#8a8a8a"/></svg>`;
const folder = open => `<svg class="fold" viewBox="0 0 16 14"><path d="M0 1h6l1 2h9v10.500H0z" fill="#5cbdea"/><path d="M0 ${open ? 7 : 4}h16v${open ? 6.5 : 9.5}H0z" fill="#7dd0f7"/>${open ? '<path d="M1 4h14v3H1z" fill="#4aa3cf"/>' : ''}</svg>`;
const favIcon = '<svg class="fold" viewBox="0 0 16 14"><path d="M8 0l2 5h5.500l-4.300 3.500L13 14l-5-3.300L3 14l1.700-5.500L.5 5H6z" fill="#eceade" stroke="#c5c3b5"/></svg>';
const node = (t, l = 0, open = false, cls = '', ic = folder(open)) => `<div class="node l${l} ${cls}">${arrow(open)}${ic}<span>${t}</span></div>`;
const dirs = 'alaska arcgis9.3 asia australia baltimore Beijing boston_metro brooklyngrids california canada chicago colorado columbia_md connecticut coreii_1 crack_arcgis_101 detroit esridata_9 europe france greenline houston ireland jgl-sports korea loft london los_angeles maine mars massachusetts mcny mexico minnesota monhegan montana netherlands new_england newark nfreeman NJ northamerica nyc'.split(' ');
document.getElementById('tree').innerHTML =
  node('Home') + node('Favourites', 0, true, 'sel', favIcon) +
  node('/Users/neil/Documents/gis', 1) + node('/Users/neil/Dropbox/GIS/c', 1) + node('/Users/neil/landsat/proces', 1) +
  node('/Volumes/oeil/gis/data', 1, true) + dirs.map(d => node(d, 2)).join('');

// Attribute table
const heads = ['', 'OUTFALL_NUM_TEXT', 'E_OR_ABAND', 'CSO_GROUP', 'TIDE_GATE', 'TIDE_GATE_QE_ID', 'OCIATED_PL', '_CONNECTIO', '_HOT_SPOT_Z', 'ESENTED_OU'];
const rows = [
  ['2', 'North Mainstream', '01', 'M97-1 or 2', 'M97', 'Zone 1-4-…'],
  ['3', 'North Mainstream', '03', 'M97-3', 'M97', 'Zone 1-4-…'],
  ['16', 'North Branch', '01', 'N10A', 'N10A', ''],
  ['17', 'North Branch', '01', 'N10B', 'N10B', ''],
  ['18', 'North Branch', '01', 'N09', 'N09', ''],
  ['21', 'North Branch', '01', 'N07', 'N07', ''],
  ['20', 'North Branch', '01', 'N08', 'N08', '']
];
document.getElementById('grid').innerHTML =
  '<div class="row head">' + heads.map(h => `<span${h === '_CONNECTIO' ? ' class="clipend"' : ''}><div><em>${h}</em></div></span>`).join('') + '</div>' +
  rows.map(([n, g, t, q, c, z], i) => '<div class="row">' +
    `<span class="rn">${i + 1}</span>` + [n, 'Active', g, t, q, '01 - Stickney', 'DS' + c, z, 'DS-' + c].map(v => `<span>${v}</span>`).join('') + '</div>').join('');

// Outfall points: x, y, colour (periwinkle by default)
const P = '#6f7be0', M = '#4fe0a8', K = '#f03fc0', Y = '#dfe860';
const pts = [
  [623,86,M],[631,101,'#d020e0'],[637,122],[651,134.500,'#9b30c8'],[660,150,'#c8564c'],[784,79,'#10b850'],[773,97,'#38cbd0'],[775,104,'#48d890'],[771,128,'#48d890'],[771,146,'#b858e8'],[777,156.600,'#30c8e0'],[777,154,'#c8b028'],[796,167,'#f02878'],[783,174,'#68d838'],[810,191,'#68c020'],[813,198,'#f04868'],[822,196,'#40d890'],
  [918,72,'#d88820'],[917,76,'#d88820'],[918,88,'#30d838'],[917.500,97,'#d88820'],[917,97,'#d88820'],[917,123],[916,130],[916,165.500,K],[917,164],[921,204,'#48e850'],[921,210,'#4a40d0'],
  [845,212,'#78e070'],[852,211],[864,216,'#f01860'],[881,230,'#f05068'],[931,244.700,M],[932,244,'#30e0c0'],[943,271,K],[939,288],[941,296],[942,305],[946,310,K],[947,313,K],[955,319],[963,325],[963,330],[977,345],[978,346],[993,360,'#40b810'],[1009,378],[1007,378],[1005,386],[1008,399,'#40b810'],
  [1038,433],[1044,432],[1064,429],[1068,428],[1090,429,'#f82850'],[1039,441],[1041,451],[1043,461,'#e040d0'],[1044,467,'#40e850'],[1046,472,'#3898e8'],[1045,483,'#c020a0'],[1045,478,'#80b818'],[1046,485,'#80b818'],[1038,507],[1033,516],[1028,518],[988,529,'#b060e0'],[996,529],[931,546,'#4a40d0'],[942,553],[953,547],[959,546],[963,543],[926,560,'#98b820'],[1006,561,'#b060e0'],[1005,573],
  [668,207],[669,236],[671,259,M],[669,282,'#4088e0'],[673,303,M],[680,317,'#18a0f0'],[679,317,'#18a0f0'],[681,328,M],[686,335,M],[696,351],[694,349,M],[692,346,M],[701,357,K],[723,383,M],[710,394,'#98e048'],[706,400,'#d0b858'],[705,409,Y],[705,415,Y],[708,417],[710,420,Y],[709,430,'#1848a0'],[707,436,'#f08040'],[706,434,'#40d880'],[707,430,'#30e0d0'],[712,442,'#8828f0'],[718,448,'#f09050'],[718,450],[721,460,'#c068d8'],[718,484,'#f0b840'],[717,484,'#f0c048'],[648,491,'#58e0c0'],
  [714,534,'#d85868'],[691,547,'#38b8c8'],[686,553,'#e850a0'],[696,560,'#a878f0'],[720,568,'#f0b840'],[694,579,'#801818'],[692,579,'#e02010'],[695,583,'#201890'],[696,584,'#4028d0'],[745,612,'#d0d820'],[805,609],[783,617,'#9060d0'],[785,619],[786,617],[782,621],[843,595],[844,593,'#8060d0'],[859,588],[870,581.500],[870,582],[893,572,'#80e8a0'],[893,573.500,'#80e888'],[906,566,'#70c830'],[739,645],[744,645],
  [901,969],[919,969],[947,968],[943,970],[952,970],[974,967],[986,967],[1065,969],[1070,973],[1068,973],[1076,974],[1087,973],[1085,975],[1173,985],[1188,986.500],[1187.500,987],[1133,991,'#3880c8'],[1002,1003],[1202,1003]
];
document.getElementById('dots').innerHTML = pts.map(([x, y, c = P]) => `<circle cx="${x}" cy="${y}" r="2.800" fill="${c}"/>`).join('');
```
